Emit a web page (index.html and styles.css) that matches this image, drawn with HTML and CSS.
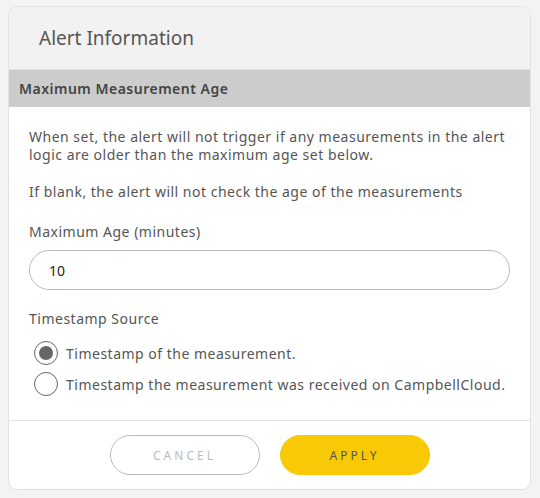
FILE: index.html
```html
<html>
<head>
  <meta charset="UTF-8">
  <title>Alert Information</title>
  <link rel="stylesheet" href="styles.css">
</head>
<body>

<div class="card">
  <div class="card-head">Alert Information</div>

  <div class="section-title">Maximum Measurement Age</div>

  <div class="card-body">
    <p class="info">When set, the alert will not trigger if any measurements in the alert logic are older than the maximum age set below.</p>
    <p class="info">If blank, the alert will not check the age of the measurements</p>

    <label class="field-label" for="maxAge">Maximum Age (minutes)</label>
    <input class="text-input" id="maxAge" type="text" value="10">

    <div class="field-label group-label">Timestamp Source</div>
    <label class="radio-row">
      <span class="radio checked"></span>
      Timestamp of the measurement.
    </label>
    <label class="radio-row">
      <span class="radio"></span>
      Timestamp the measurement was received on CampbellCloud.
    </label>
  </div>

  <div class="card-foot">
    <button class="btn btn-cancel">Cancel</button>
    <button class="btn btn-apply">Apply</button>
  </div>
</div>

</body>
</html>
```

FILE: styles.css
```css
body { margin: 0; padding: 6px 9px 8px 8px; background: #f3f3f3; font-family: "Noto Sans", sans-serif; color: #555; }

.card {
  background: #fff;
  border: 1px solid #e3e3e3;
  border-radius: 9px;
  overflow: hidden;
}

.card-head {
  background: #f2f2f2;
  height: 62px;
  line-height: 62px;
  padding-left: 30px;
  font-size: 19px;
  color: #555;
  border-bottom: 1px solid #e3e3e3;
}

.section-title {
  background: #cccccc;
  height: 37px;
  line-height: 37px;
  padding-left: 10px;
  font-size: 14px;
  font-weight: 600;
  letter-spacing: 0.5px;
  color: #444;
}

.card-body { padding: 21px 20px 18px 20px; letter-spacing: 0.5px; }

.info { margin: 0 0 19px 0; font-size: 14px; line-height: 18px; }
.info + .info { margin-bottom: 22px; }

.field-label { display: block; font-size: 14px; line-height: 18px; margin-bottom: 9px; }
.group-label { margin-top: 20px; margin-bottom: 12px; }

.text-input {
  display: block;
  box-sizing: border-box;
  width: 100%;
  height: 40px;
  border: 1px solid #bbb;
  border-radius: 20px;
  padding: 0 19px;
  font: 14px "Noto Sans", sans-serif;
  color: #222;
  outline: none;
}

.radio-row { display: flex; align-items: center; gap: 8px; font-size: 14px; height: 26px; margin-left: 5px; margin-bottom: 5px; }
.radio {
  box-sizing: border-box;
  width: 24px;
  height: 24px;
  border: 1px solid #666;
  border-radius: 50%;
  background: #fff;
  position: relative;
}
.radio.checked::after {
  content: "";
  position: absolute;
  left: 4px; top: 4px;
  width: 14px; height: 14px;
  border-radius: 50%;
  background: #666;
}

.card-foot {
  border-top: 1px solid #e3e3e3;
  display: flex;
  justify-content: center;
  gap: 20px;
  padding: 14px 0 14px 0;
}

.btn {
  width: 150px;
  height: 40px;
  border-radius: 20px;
  font: 12px "Noto Sans", sans-serif;
  text-transform: uppercase;
  letter-spacing: 3px;
  cursor: pointer;
}
.btn-cancel { background: #fff; border: 1px solid #bbb; color: #bbb; }
.btn-apply { background: #f9c905; border: 1px solid #f9c905; color: #555; }
```
